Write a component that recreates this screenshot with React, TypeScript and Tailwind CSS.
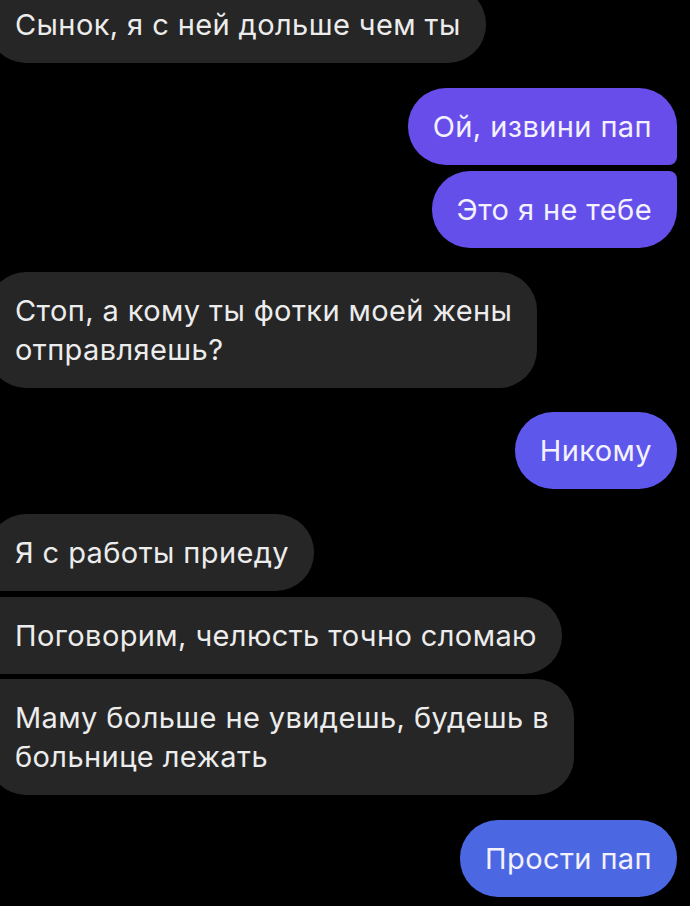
import React from "react";

const font = { fontFamily: 'Inter, "Liberation Sans", Arial, sans-serif' };

function In({ children, cls = "" }: { children: React.ReactNode; cls?: string }) {
  return (
    <div className={`self-start -ml-[12px] bg-[#262626] text-[#ececec] text-[29px] tracking-[0.4px] leading-[39px] py-[19px] pl-[27px] pr-[25px] rounded-[38px] ${cls}`}>
      {children}
    </div>
  );
}

function Out({ children, cls = "" }: { children: React.ReactNode; cls?: string }) {
  return (
    <div className={`self-end mr-[13px] text-[#f3f1ff] text-[29px] tracking-[0.4px] leading-[39px] py-[19px] px-[25px] rounded-[38px] ${cls}`}>
      {children}
    </div>
  );
}

export default function App() {
  return (
    <div className="w-[690px] h-[906px] bg-black overflow-hidden" style={font}>
      <div className="flex flex-col -mt-[14px]">
        <In>Сынок, я с ней дольше чем ты</In>
        <Out cls="mt-[25px] bg-[#684deb] rounded-br-[8px]">Ой, извини пап</Out>
        <Out cls="mt-[6px] bg-[#654fea] rounded-tr-[8px]">Это я не тебе</Out>
        <In cls="mt-[24px]">
          Стоп, а кому ты фотки моей жены
          <br />
          отправляешь?
        </In>
        <Out cls="mt-[24px] bg-[#5d57eb]">Никому</Out>
        <In cls="mt-[25px] rounded-bl-[8px]">Я с работы приеду</In>
        <In cls="mt-[6px] rounded-l-[8px]">Поговорим, челюсть точно сломаю</In>
        <In cls="mt-[5px] rounded-tl-[8px]">
          Маму больше не увидешь, будешь в
          <br />
          больнице лежать
        </In>
        <Out cls="mt-[25px] bg-[#4b68e2]">Прости пап</Out>
      </div>
    </div>
  );
}
